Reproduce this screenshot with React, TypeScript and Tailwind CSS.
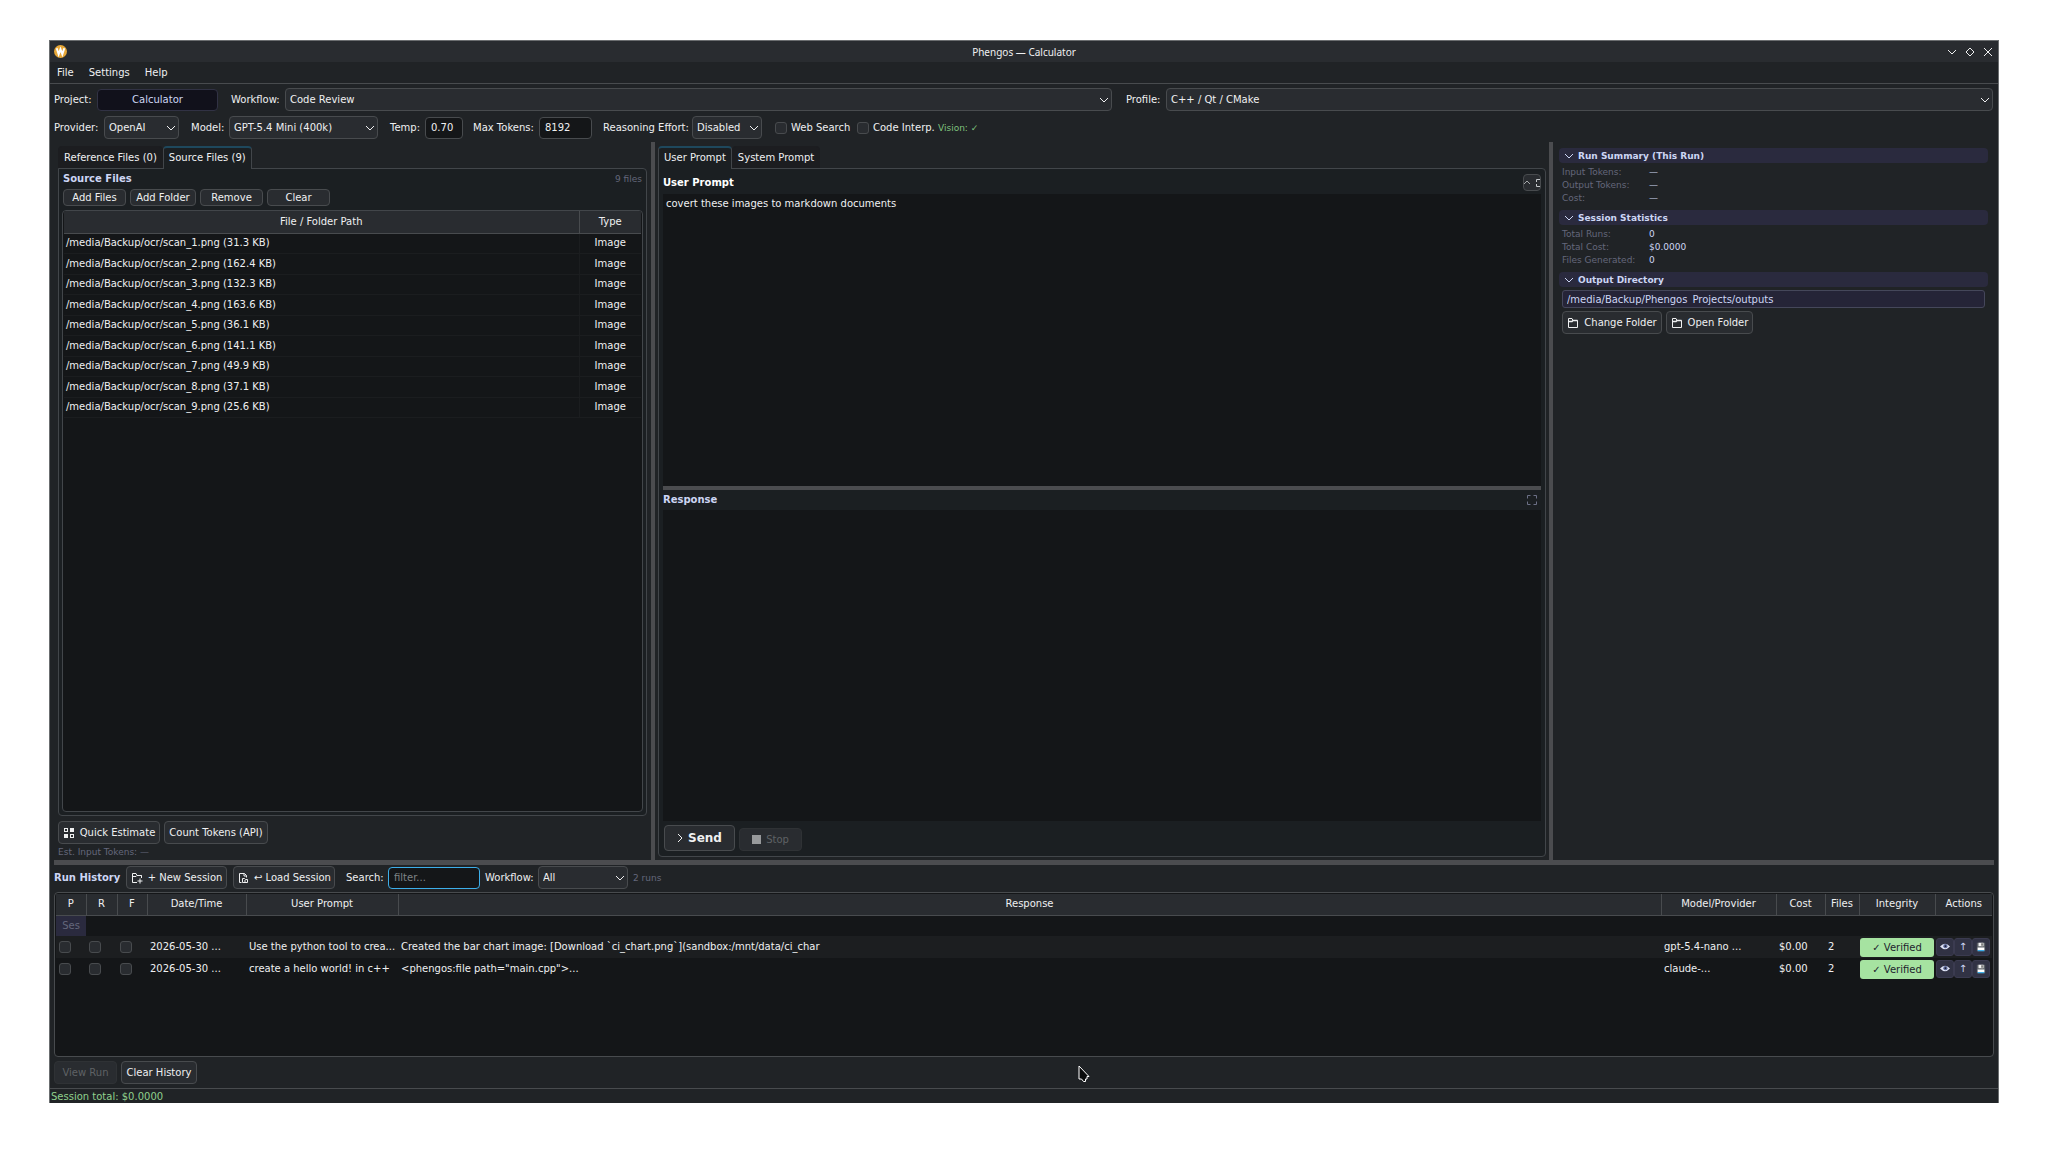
import { ReactNode, useState } from 'react';

const sourceFiles = [
  { name: 'scan_1.png', size: '31.3 KB' },
  { name: 'scan_2.png', size: '162.4 KB' },
  { name: 'scan_3.png', size: '132.3 KB' },
  { name: 'scan_4.png', size: '163.6 KB' },
  { name: 'scan_5.png', size: '36.1 KB' },
  { name: 'scan_6.png', size: '141.1 KB' },
  { name: 'scan_7.png', size: '49.9 KB' },
  { name: 'scan_8.png', size: '37.1 KB' },
  { name: 'scan_9.png', size: '25.6 KB' },
];

const runs = [
  {
    date: '2026-05-30 ...',
    prompt: 'Use the python tool to crea...',
    response: 'Created the bar chart image: [Download `ci_chart.png`](sandbox:/mnt/data/ci_char',
    model: 'gpt-5.4-nano ...',
    cost: '$0.00',
    files: 2,
  },
  {
    date: '2026-05-30 ...',
    prompt: 'create a hello world! in c++',
    response: '<phengos:file path="main.cpp">...',
    model: 'claude-...',
    cost: '$0.00',
    files: 2,
  },
];

const historyColumns = [
  { label: 'P', width: 'w-[30px]' },
  { label: 'R', width: 'w-[31px]' },
  { label: 'F', width: 'w-[30px]' },
  { label: 'Date/Time', width: 'w-[99px]' },
  { label: 'User Prompt', width: 'w-[152px]' },
  { label: 'Response', width: '' },
  { label: 'Model/Provider', width: 'w-[115px]' },
  { label: 'Cost', width: 'w-[49px]' },
  { label: 'Files', width: 'w-[34px]' },
  { label: 'Integrity', width: 'w-[76px]' },
  { label: 'Actions', width: 'w-[57px]' },
];

const ChevronDown = ({ className = '' }: { className?: string }) => (
  <svg viewBox="0 0 10 10" className={`w-2.5 h-2.5 shrink-0 ${className}`} fill="none" stroke="currentColor">
    <path d="M1 3l4 4 4-4" />
  </svg>
);

const FolderIcon = () => (
  <svg viewBox="0 0 12 12" className="w-3 h-3 shrink-0" fill="none" stroke="currentColor">
    <path d="M1.5 10.5v-9H5l1 2h4.5v7z" />
    <path d="M1.5 4.5H5l1-1h4.5" strokeWidth="1.5" />
  </svg>
);

const NewSessionIcon = () => (
  <svg viewBox="0 0 12 12" className="w-3 h-3 shrink-0" fill="none" stroke="currentColor">
    <path d="M6 10.5H1.5v-9H5l1 2h4.5V6M1.5 4.5H5l1-1h4.5M9 6.5v5M6.5 9h5" />
  </svg>
);

const LoadSessionIcon = () => (
  <svg viewBox="0 0 12 12" className="w-3 h-3 shrink-0" fill="none" stroke="currentColor">
    <path d="M4.5 10.5h-2v-9h5l2 2v2M7 1.5V4h2.5M5.5 10.5v-4h2l1 1h2v3zM7 9h2" />
  </svg>
);

const EstimateIcon = () => (
  <svg viewBox="0 0 12 12" className="w-3 h-3 shrink-0" fill="currentColor" fillRule="evenodd">
    <path d="M1 1h4v4H1zM2 2v2h2V2z" />
    <path d="M7 1h4v4H7zM1 7h4v4H1z" />
    <path d="M7 7h4v4H7zM8 8v2h2V8z" />
  </svg>
);

const ExpandIcon = () => (
  <svg viewBox="0 0 10 10" className="w-2.5 h-2.5 shrink-0" fill="none" stroke="currentColor">
    <path d="M.5 3.5v-3h3M6.5 .5h3v3M9.5 6.5v3h-3M3.5 9.5h-3v-3" />
  </svg>
);

const Button = ({ children, className = '', disabled = false }: { children: ReactNode; className?: string; disabled?: boolean }) => (
  <button
    disabled={disabled}
    className={`flex items-center justify-center gap-[5px] border rounded whitespace-nowrap bg-[#292c30] ${
      disabled ? 'border-[#2f3235] text-[#5f6265]' : 'border-[#484b4e] hover:border-[#3daee9]'
    } ${className}`}
  >
    {children}
  </button>
);

const Select = ({ id, value, className = '' }: { id: string; value: string; className?: string }) => (
  <div className={`relative h-[23px] ${className}`}>
    <select
      id={id}
      className="block w-full h-full pl-1 pr-4 appearance-none border rounded border-[#484b4e] bg-[#292c30] outline-none"
    >
      <option>{value}</option>
    </select>
    <ChevronDown className="absolute right-[3px] top-[7px] pointer-events-none" />
  </div>
);

const Checkbox = ({ id, label }: { id: string; label?: string }) => (
  <input
    id={id}
    type="checkbox"
    aria-label={label}
    className="block w-3 h-3 shrink-0 appearance-none border rounded-[3px] border-[#484b4e] bg-[#292c30] checked:bg-[#3daee9]"
  />
);

const Tab = ({ children, active = false, onClick }: { children: ReactNode; active?: boolean; onClick: () => void }) => (
  <button
    role="tab"
    aria-selected={active}
    onClick={onClick}
    className={`h-[23px] px-[5px] rounded-t whitespace-nowrap ${
      active
        ? 'relative z-10 pb-0.5 bg-[#1b1f22] border-t-2 border-x border-t-[#1e485d] border-x-[#42464a]'
        : 'bg-[#1c1d20] border border-[#1c1d20] border-b-[#42464a]'
    }`}
  >
    {children}
  </button>
);

const Section = ({ title, children }: { title: string; children: ReactNode }) => (
  <section>
    <button className="flex items-center w-full h-[15px] gap-1 pl-[5px] rounded-sm text-[9px] font-bold text-left bg-[#2a2a3e] text-[#cdd6f4]">
      <ChevronDown />
      {title}
    </button>
    {children}
  </section>
);

const Stat = ({ label, value }: { label: string; value: string }) => (
  <div className="flex h-[13px] text-[9px] leading-[14px]">
    <dt className="w-[87px] text-[#64677b]">{label}</dt>
    <dd className="text-[#cdd6f4]">{value}</dd>
  </div>
);

const TitleBar = () => (
  <header className="relative flex items-center justify-between h-[21px] pl-1 pr-[5px] bg-[#292c30]">
    <svg viewBox="0 0 12 12" className="w-[13px] h-[13px]">
      <circle cx="6" cy="6" r="6" fill="#e8a838" />
      <path d="M2.5 3l1.8 5.5L6 4l1.7 4.5L9.5 3" fill="none" stroke="#fff" strokeWidth="1.8" />
    </svg>
    <h1 className="absolute inset-x-0 text-center pointer-events-none font-['Noto_Sans',sans-serif]">Phengos — Calculator</h1>
    <div className="flex gap-2">
      <button aria-label="Minimize"><ChevronDown /></button>
      <button aria-label="Maximize">
        <svg viewBox="0 0 10 10" className="w-2.5 h-2.5" fill="none" stroke="currentColor">
          <path d="M5 1l4 4-4 4-4-4z" />
        </svg>
      </button>
      <button aria-label="Close">
        <svg viewBox="0 0 10 10" className="w-2.5 h-2.5" fill="none" stroke="currentColor">
          <path d="M1 1l8 8M9 1l-8 8" />
        </svg>
      </button>
    </div>
  </header>
);

const Toolbar = () => (
  <div className="flex flex-col gap-[5px] pl-1 pr-[5px] pt-1 whitespace-nowrap">
    <div className="flex items-center">
      <label htmlFor="project" className="w-[43px]">Project:</label>
      <button id="project" className="w-[121px] h-[22px] border rounded border-[#313244] bg-[#11111b] text-[#cdd6f4]">
        Calculator
      </button>
      <label htmlFor="workflow" className="w-[54px] ml-[13px]">Workflow:</label>
      <Select id="workflow" value="Code Review" className="flex-1" />
      <label htmlFor="profile" className="w-10 ml-[14px]">Profile:</label>
      <Select id="profile" value="C++ / Qt / CMake" className="flex-1" />
    </div>
    <div className="flex items-center">
      <label htmlFor="provider" className="w-[50px]">Provider:</label>
      <Select id="provider" value="OpenAI" className="w-[75px]" />
      <label htmlFor="model" className="w-[38px] ml-3">Model:</label>
      <Select id="model" value="GPT-5.4 Mini (400k)" className="w-[149px]" />
      <label htmlFor="temp" className="w-[35px] ml-3">Temp:</label>
      <input id="temp" defaultValue="0.70" className="w-[38px] h-[22px] px-[5px] border rounded border-[#484b4e] bg-[#141618]" />
      <label htmlFor="tokens" className="w-[66px] ml-[10px]">Max Tokens:</label>
      <input id="tokens" defaultValue="8192" className="w-[53px] h-[22px] px-[5px] border rounded border-[#484b4e] bg-[#141618]" />
      <label htmlFor="effort" className="w-[89px] ml-[11px]">Reasoning Effort:</label>
      <Select id="effort" value="Disabled" className="w-[70px]" />
      <div className="flex items-center w-[82px] gap-1 ml-[13px]">
        <Checkbox id="web" />
        <label htmlFor="web">Web Search</label>
      </div>
      <div className="flex items-center w-[81px] gap-1">
        <Checkbox id="interp" />
        <label htmlFor="interp">Code Interp.</label>
      </div>
      <span className="text-[9px] text-[#7fc17d]">Vision: ✓</span>
    </div>
  </div>
);

const FilesPanel = () => {
  const [tab, setTab] = useState('source');

  return (
    <div className="flex flex-col w-[597px] px-1 pt-1">
      <div role="tablist" className="flex">
        <Tab active={tab === 'reference'} onClick={() => setTab('reference')}>Reference Files (0)</Tab>
        <Tab active={tab === 'source'} onClick={() => setTab('source')}>Source Files (9)</Tab>
      </div>
      <div className="flex flex-col flex-1 p-[3px] -mt-px border rounded-b rounded-tr border-[#42464a] bg-[#1b1f22]">
        <div className="flex items-start justify-between h-[17px] px-px">
          <h2 className="font-bold text-[#cdd6f4]">Source Files</h2>
          <span className="text-[9px] text-[#64677b]">9 files</span>
        </div>
        <div className="flex gap-1 px-px">
          <Button className="w-[63px] h-[17px]">Add Files</Button>
          <Button className="w-[66px] h-[17px]">Add Folder</Button>
          <Button className="w-[63px] h-[17px]">Remove</Button>
          <Button className="w-[63px] h-[17px]">Clear</Button>
        </div>
        <div className="flex-1 px-px mt-1 overflow-hidden border rounded border-[#42464a] bg-[#141618]">
          <table className="w-full table-fixed">
            <thead className="bg-[#292c30]">
              <tr className="h-[22px] border-b border-[#484b4e]">
                <th className="font-normal border-r border-[#484b4e]">File / Folder Path</th>
                <th className="w-[62px] font-normal">Type</th>
              </tr>
            </thead>
            <tbody>
              {sourceFiles.map((file) => (
                <tr key={file.name} className="border-b border-[#1b1d1f] odd:h-5 even:h-[21px]">
                  <td className="pl-0.5 border-r border-[#1b1d1f]">/media/Backup/ocr/{file.name} ({file.size})</td>
                  <td className="text-center">Image</td>
                </tr>
              ))}
            </tbody>
          </table>
        </div>
      </div>
      <div className="flex gap-1 mt-[5px]">
        <Button className="w-[102px] h-[23px]"><EstimateIcon />Quick Estimate</Button>
        <Button className="w-[104px] h-[23px]">Count Tokens (API)</Button>
      </div>
      <p className="h-4 text-[9px] leading-[17px] text-[#64677b]">Est. Input Tokens: —</p>
    </div>
  );
};

const PromptPanel = () => {
  const [tab, setTab] = useState('user');

  return (
    <div className="flex flex-col flex-1 min-w-0 px-[3px] pt-1 pb-[3px]">
      <div role="tablist" className="flex">
        <Tab active={tab === 'user'} onClick={() => setTab('user')}>User Prompt</Tab>
        <Tab active={tab === 'system'} onClick={() => setTab('system')}>System Prompt</Tab>
      </div>
      <div className="flex flex-col flex-1 px-1 pb-[5px] -mt-px border rounded-b rounded-tr border-[#42464a] bg-[#1b1f22]">
        <div className="flex items-center justify-between h-[25px] pt-0.5">
          <label htmlFor="prompt" className="font-bold text-white">User Prompt</label>
          <button aria-label="Collapse or expand" className="flex items-center justify-between w-[18px] h-[17px] overflow-hidden border rounded border-[#484b4e] bg-[#292c30]">
            <svg viewBox="0 0 8 10" className="w-2 h-2.5 shrink-0" fill="none" stroke="#a5a8ab">
              <path d="M0 6l3-3 3 3" />
            </svg>
            <svg viewBox="0 0 4 10" className="w-1 h-2.5 shrink-0" fill="none" stroke="#c5c8cb">
              <path d="M4 1.5H.5V4M.5 6v2.5H4" />
            </svg>
          </button>
        </div>
        <textarea
          id="prompt"
          defaultValue="covert these images to markdown documents"
          className="block w-full h-[292px] px-[3px] py-[3px] resize-none outline-none bg-[#141618]"
        />
        <div className="h-1 bg-[#4b4c4f]" />
        <div className="flex items-center justify-between h-5 pr-1">
          <label htmlFor="response" className="font-bold text-[#cdd6f4]">Response</label>
          <button aria-label="Expand response" className="text-[#6c7086]"><ExpandIcon /></button>
        </div>
        <textarea id="response" readOnly className="block flex-1 w-full resize-none outline-none bg-[#141618]" />
        <div className="flex items-end gap-1 px-px mt-1">
          <Button className="w-[71px] h-[26px] text-[12px] font-bold">
            <svg viewBox="0 0 6 10" className="w-1.5 h-2.5" fill="none" stroke="currentColor">
              <path d="M1 1l4 4-4 4" />
            </svg>
            Send
          </Button>
          <Button disabled className="w-[63px] h-[23px]">
            <span className="w-[9px] h-[9px] bg-[#97999b]" />
            Stop
          </Button>
        </div>
      </div>
    </div>
  );
};

const SummaryPanel = () => (
  <aside className="flex flex-col w-[441px] gap-[5px] px-1.5 pt-1.5">
    <Section title="Run Summary (This Run)">
      <dl className="pl-[3px] py-px mt-px">
        <Stat label="Input Tokens:" value="—" />
        <Stat label="Output Tokens:" value="—" />
        <Stat label="Cost:" value="—" />
      </dl>
    </Section>
    <Section title="Session Statistics">
      <dl className="pl-[3px] py-px mt-px">
        <Stat label="Total Runs:" value="0" />
        <Stat label="Total Cost:" value="$0.0000" />
        <Stat label="Files Generated:" value="0" />
      </dl>
    </Section>
    <Section title="Output Directory">
      <div className="px-[3px] pt-[3px]">
        <input
          aria-label="Output directory"
          readOnly
          value="/media/Backup/Phengos_Projects/outputs"
          className="block w-full h-[18px] px-1 leading-4 border rounded-[3px] border-[#45475a] bg-[#252437] text-[#cdd6f4]"
        />
        <div className="flex gap-1 mt-[3px]">
          <Button className="w-[100px] h-[23px]"><FolderIcon />Change Folder</Button>
          <Button className="w-[87px] h-[23px]"><FolderIcon />Open Folder</Button>
        </div>
      </div>
    </Section>
  </aside>
);

const EyeIcon = () => (
  <svg viewBox="0 0 12 12" className="w-2.5 h-2.5">
    <path d="M0 5.500Q6-1.500 12 5.500 6 12 0 5.500z" fill="#dfe3f5" />
    <circle cx="6.5" cy="5" r="2.5" fill="#5d6a9b" />
    <circle cx="6.5" cy="5" r="1" fill="#1e1e2e" />
  </svg>
);

const DiskIcon = () => (
  <svg viewBox="0 0 12 12" className="w-2.5 h-2.5">
    <path d="M1 1h10v10H1z" fill="#5c6066" />
    <path d="M3 1h6v4H3z" fill="#f2f2f2" />
    <path d="M6.5 1.5H8v3H6.5z" fill="#444" />
    <path d="M2 6.5h8v3H2z" fill="#fff" />
    <path d="M2 9.5h8V11H2z" fill="#3daee9" />
  </svg>
);

const ActionButton = ({ label, children }: { label: string; children: ReactNode }) => (
  <button
    aria-label={label}
    className="flex items-center justify-center w-[18px] h-[18px] border rounded-[3px] border-[#3b3b50] bg-[#313244] text-[#cdd6f4]"
  >
    {children}
  </button>
);

const RunHistory = () => (
  <section className="flex flex-col px-1 whitespace-nowrap">
    <div className="flex items-center mt-px">
      <h2 className="w-[72px] font-bold text-[#cdd6f4]">Run History</h2>
      <Button className="w-[101px] h-[23px]"><NewSessionIcon />+ New Session</Button>
      <Button className="w-[102px] h-[23px] ml-1.5"><LoadSessionIcon />↩ Load Session</Button>
      <label htmlFor="search" className="w-[42px] ml-[11px]">Search:</label>
      <input
        id="search"
        placeholder="filter..."
        className="w-[92px] h-[22px] px-[5px] border rounded border-[#3daee9] bg-[#141618] outline-none placeholder:text-[#7f8386]"
      />
      <label htmlFor="history-workflow" className="w-[53px] ml-[5px]">Workflow:</label>
      <Select id="history-workflow" value="All" className="w-[90px]" />
      <span className="ml-[5px] text-[9px] text-[#64677b]">2 runs</span>
    </div>
    <div className="h-[165px] p-px mt-[3px] overflow-hidden border rounded border-[#484b4e] bg-[#141618]">
      <table className="w-full table-fixed">
        <thead className="bg-[#292c30]">
          <tr className="h-[21px] border-b border-[#484b4e]">
            {historyColumns.map((column) => (
              <th key={column.label} className={`font-normal border-r border-[#484b4e] last:border-r-0 ${column.width}`}>
                {column.label}
              </th>
            ))}
          </tr>
        </thead>
        <tbody>
          <tr className="h-[21px]">
            <td className="overflow-hidden text-center bg-[#2a2a3e] text-[#64677b]">Ses</td>
            <td colSpan={10} />
          </tr>
          {runs.map((run) => (
            <tr key={run.prompt} className="h-[22px] even:bg-[#1c1e20]">
              <td className="pl-[3px]"><Checkbox id={`p-${run.model}`} label="Prompt" /></td>
              <td className="pl-[3px]"><Checkbox id={`r-${run.model}`} label="Response" /></td>
              <td className="pl-[3px]"><Checkbox id={`f-${run.model}`} label="Files" /></td>
              <td className="pl-[3px]">{run.date}</td>
              <td className="pl-[3px]">{run.prompt}</td>
              <td className="pl-[3px]">{run.response}</td>
              <td className="pl-[3px]">{run.model}</td>
              <td className="pl-[3px]">{run.cost}</td>
              <td className="pl-[3px]">{run.files}</td>
              <td className="px-px">
                <div className="h-[19px] leading-[19px] text-center rounded-[3px] bg-[#a6e3a1] text-[#1e1e2e]">✓ Verified</div>
              </td>
              <td>
                <div className="flex pl-px">
                  <ActionButton label="View"><EyeIcon /></ActionButton>
                  <ActionButton label="Restore">↑</ActionButton>
                  <ActionButton label="Save"><DiskIcon /></ActionButton>
                </div>
              </td>
            </tr>
          ))}
        </tbody>
      </table>
    </div>
    <div className="flex gap-1 mt-1">
      <Button disabled className="w-[63px] h-[23px]">View Run</Button>
      <Button className="w-[76px] h-[23px]">Clear History</Button>
    </div>
  </section>
);

export default function App() {
  return (
    <div className="flex flex-col min-h-screen px-[49px] pt-10 pb-[58px] bg-white">
      <div className="relative flex flex-col flex-1 border-t border-x border-[#6b6e70] bg-[#202326] text-[#eff0f1] text-[10px] leading-[14px] font-['DejaVu_Sans',sans-serif]">
        <TitleBar />
        <nav className="flex items-center h-[22px] px-[7px] gap-[15px] border-b border-[#484b4e]">
          <button>File</button>
          <button>Settings</button>
          <button>Help</button>
        </nav>
        <Toolbar />
        <main className="flex flex-1 px-1 mt-[3px]">
          <FilesPanel />
          <div className="w-1 bg-[#4b4c4f]" />
          <PromptPanel />
          <div className="w-1 bg-[#4b4c4f]" />
          <SummaryPanel />
        </main>
        <div className="h-[5px] mx-1 bg-[#4b4c4f]" />
        <RunHistory />
        <footer className="h-[15px] leading-4 pl-px mt-1 border-t border-[#484b4e] text-[#8fd08c]">Session total: $0.0000</footer>
        {/* Mouse pointer */}
        <svg viewBox="0 0 12 18" className="absolute left-[1028px] top-[1024px] w-3 h-[18px]" strokeLinejoin="round">
          <path d="M1 1v13h2.5l2 2.5h2V14H9v-2.5h2z" fill="#0a0b0c" stroke="#fff" />
        </svg>
      </div>
    </div>
  );
}
